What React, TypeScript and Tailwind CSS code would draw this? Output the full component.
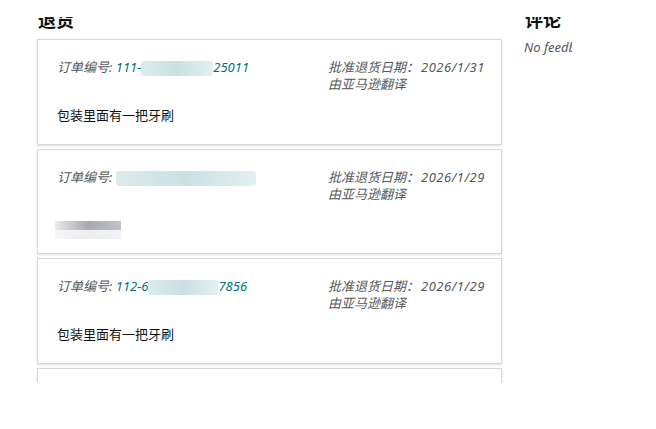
import React from "react";

const font = "font-['Noto_Sans','Noto_Sans_CJK_SC',sans-serif]";

type Ret = {
	prefix: string;
	suffix: string;
	blur: number;
	date: string;
	note?: string;
	pb: string;
};

const returns: Ret[] = [
	{ prefix: "111-", suffix: "25011", blur: 72, date: "2026/1/31", note: "包装里面有一把牙刷", pb: "pb-[20px]" },
	{ prefix: "", suffix: "", blur: 140, date: "2026/1/29", pb: "pb-[19px]" },
	{ prefix: "112-6", suffix: "7856", blur: 70, date: "2026/1/29", note: "包装里面有一把牙刷", pb: "pb-[20px]" },
	{ prefix: "113-", suffix: "0412", blur: 72, date: "2026/1/27", note: "包装里面有一把牙刷", pb: "pb-[19px]" },
];

// pixelated redaction block
const Redacted = ({ w }: { w: number }) => (
	<span
		className="inline-block h-[15px] align-middle rounded-[3px] bg-gradient-to-r from-[#dcebec] via-[#c9e0e3] to-[#e3f0f1] blur-[0.6px]"
		style={{ width: w }}
	/>
);

const Card = ({ r }: { r: Ret }) => (
	<div className={`border border-[#d5d9d9] shadow-[0_1px_2px_rgba(0,0,0,0.12)] bg-white pt-[19px] ${r.pb} pl-[19px] pr-[16px]`}>
		<div className="flex text-[13px] leading-[17px] italic">
			<div className="flex-1 text-[#565959]">
				订单编号:{" "}
				<span className="text-[#007185]">
					{r.prefix}
					<Redacted w={r.blur} />
					{r.suffix}
				</span>
			</div>
			<div className="w-[157px] text-[#565959]">
				<div>
					批准退货日期：<span className="ml-[2px] tracking-[0.5px]">{r.date}</span>
				</div>
				<div>由亚马逊翻译</div>
			</div>
		</div>
		<div className="mt-[14px] h-[17px] text-[13px] leading-[17px] text-[#0f1111]">
			{r.note ? (
				r.note
			) : (
				<span className="inline-flex flex-col w-[66px] h-[18px] -ml-[2px] mt-[1px]">
					<span className="h-[9px] bg-gradient-to-r from-[#ece8ea] via-[#a9a8b0] to-[#bfc3c9]" />
					<span className="h-[9px] bg-gradient-to-r from-[#f6f6f7] via-[#eeeef0] to-[#f2f3f4]" />
				</span>
			)}
		</div>
	</div>
);

export default function App() {
	return (
		<div className={`w-[656px] h-[429px] bg-white ${font}`}>
			{/* top band */}
			<div className="h-[17px] bg-white" />

			{/* scrolled area */}
			<div className="h-[366px] overflow-hidden">
				<div className="-mt-[9px] flex pl-[37px]">
					{/* returns column */}
					<div className="w-[465px]">
						<h2 className="text-[18px] leading-[24px] font-bold text-[#0f1111] pl-[1px] mb-[7px]">
							退货
						</h2>
						<div className="flex flex-col gap-[4px]">
							{returns.map((r, i) => (
								<Card key={i} r={r} />
							))}
						</div>
					</div>

					{/* feedback column */}
					<div className="ml-[22px] w-[48px] overflow-hidden whitespace-nowrap">
						<h2 className="text-[18px] leading-[24px] font-bold text-[#0f1111] pl-[1px] mb-[7px]">
							评论
						</h2>
						<p className="text-[13px] leading-[17px] italic text-[#565959]">
							No feedback
						</p>
					</div>
				</div>
			</div>
		</div>
	);
}
